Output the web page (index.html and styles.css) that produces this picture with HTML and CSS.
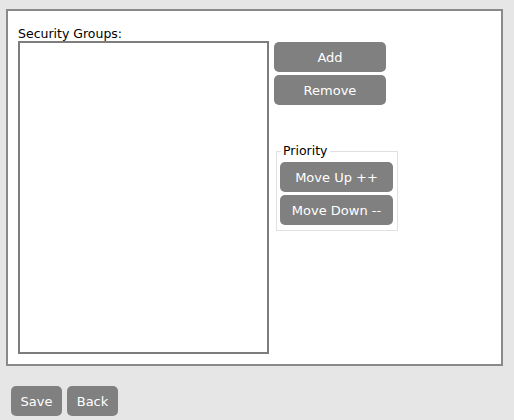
FILE: index.html
```html
<!DOCTYPE html>
<html>
<head>
<meta charset="utf-8">
<link rel="stylesheet" href="styles.css">
</head>
<body>
<div class="panel">
  <div class="label">Security Groups:</div>
  <div class="row">
    <div class="listbox"></div>
    <div class="side">
      <div class="btn-col">
        <button class="btn wide">Add</button>
        <button class="btn wide">Remove</button>
      </div>
      <fieldset class="priority">
        <legend>Priority</legend>
        <button class="btn wide">Move Up ++</button>
        <button class="btn wide">Move Down --</button>
      </fieldset>
    </div>
  </div>
</div>
<div class="footer">
  <button class="btn small">Save</button>
  <button class="btn small">Back</button>
</div>
</body>
</html>
```
FILE: styles.css
```css
html, body {
  margin: 0;
  padding: 0;
  background: #e6e6e6;
  font-family: "DejaVu Sans", Verdana, sans-serif;
  font-size: 12.5px;
  color: #000;
}
body {
  padding: 9px 12px 0 6px;
}
.panel {
  box-sizing: border-box;
  width: 497px;
  height: 357px;
  background: #fff;
  border: 2px solid #8a8a8a;
  padding: 16px 10px 0 10px;
}
.label {
  line-height: 14px;
  height: 14px;
}
.row {
  display: flex;
  align-items: flex-start;
}
.listbox {
  box-sizing: border-box;
  width: 251px;
  height: 313px;
  border: 2px solid #7d7d7d;
  background: #fff;
}
.side {
  display: flex;
  flex-direction: column;
  margin-left: 5px;
}
.btn-col {
  display: flex;
  flex-direction: column;
  gap: 3px;
  margin-top: 1px;
}
.btn {
  font-family: "DejaVu Sans", Verdana, sans-serif;
  font-size: 13px;
  color: #fff;
  background: #808080;
  border: none;
  border-radius: 5px;
  height: 30px;
  padding: 0;
  cursor: pointer;
}
.wide {
  width: 112px;
}
.priority {
  margin: 39px 0 0 2px;
  padding: 4px 4px 5px 3px;
  border: 1px solid #e0e0e0;
  width: 113px;
  display: flex;
  flex-direction: column;
  gap: 3px;
}
.priority legend {
  padding: 0 2px;
  margin-left: 1px;
  font-size: 12.5px;
  line-height: 14px;
}
.priority .btn {
  width: 113px;
}
.footer {
  display: flex;
  gap: 5px;
  margin-top: 20px;
  margin-left: 5px;
}
.small {
  width: 51px;
}
```
